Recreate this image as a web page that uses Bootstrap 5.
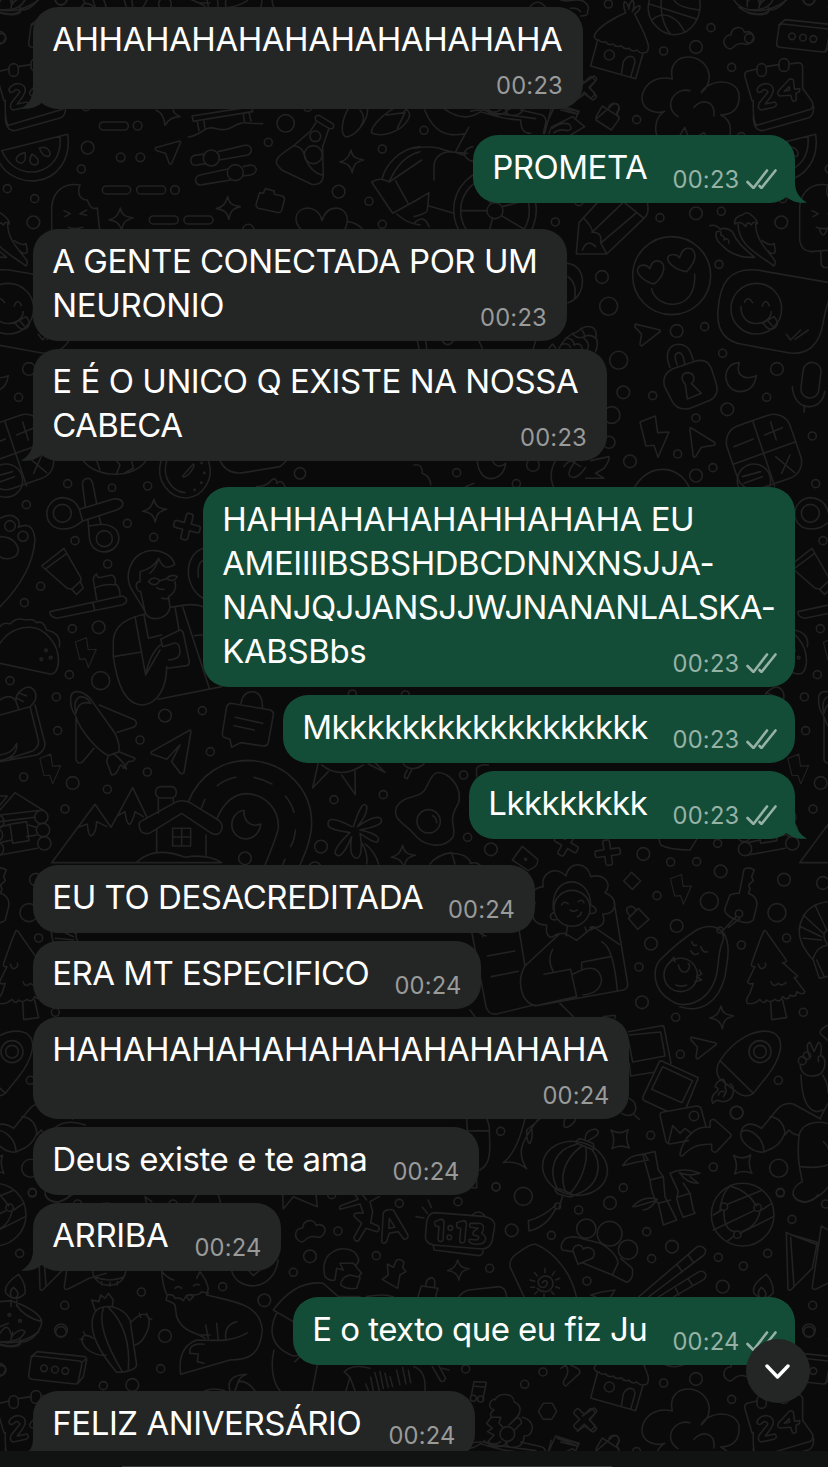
<!DOCTYPE html>
<html lang="pt-BR">
<head>
  <meta charset="UTF-8">
  <meta name="viewport" content="width=device-width, initial-scale=1">
  <title>Conversa</title>
  <link href="https://cdn.jsdelivr.net/npm/bootstrap@5.3.0/dist/css/bootstrap.min.css" rel="stylesheet">
  <style>
    body {
      background: #0a0a0a;
      font-family: Inter, "Liberation Sans", sans-serif;
    }
    .chat-screen {
      width: 828px;
      height: 1467px;
    }
    .wallpaper {
      z-index: 0;
      fill: none;
      stroke: #222;
      stroke-width: 4.8;
      stroke-linecap: round;
      stroke-linejoin: round;
    }
    .chat-log {
      z-index: 1;
      height: 1451px;
      padding: 7px 33px 0;
      gap: 8.5px;
    }
    .bubble {
      display: grid;
      padding: 9.75px 19.5px 11.75px 19.25px;
      border-radius: 25px;
      color: #fff;
      font-size: 33px;
      line-height: 44px;
    }
    .bubble-in { background: #242626; }
    .bubble-out { background: #144d37; }
    .last-in-group { margin-bottom: 18px; }
    .bubble-text,
    .bubble-meta { grid-area: 1 / 1; }
    .bubble-text { padding-bottom: 2px; }
    .bubble-text span { white-space: pre; }
    .meta-below .bubble-text { padding-bottom: 36px; }
    .bubble-meta {
      font-size: 23.7px;
      line-height: 30px;
      margin-bottom: -4px;
      color: #999a9a;
    }
    .bubble-out .bubble-meta {
      color: #96b2a6;
      margin-right: -1px;
    }
    .ticks {
      width: 31px;
      height: 20px;
      margin: -2px 0 0 6px;
    }
    .tail {
      bottom: 0;
      width: 30px;
      height: 26px;
    }
    .bubble-in .tail { left: -12px; fill: #242626; transform: scaleX(-1); }
    .bubble-out .tail { right: -12px; fill: #144d37; }
    .scroll-down {
      z-index: 2;
      right: 18px;
      bottom: 64px;
      width: 64px;
      height: 64px;
      background: #242626;
    }
    .input-bar {
      z-index: 1;
      height: 16px;
      background: #111313;
    }
    .input-edge {
      width: 490px;
      height: 1px;
      margin-left: 122px;
      background: #353636;
    }
  </style>
</head>
<body>

  <div class="chat-screen position-relative overflow-hidden d-flex flex-column">

    <svg class="wallpaper position-absolute top-0 start-0" width="828" height="1467" viewBox="0 0 828 1467" aria-hidden="true">
      <defs>
        <path id="spark" d="M-2-34C2-14 10-8 36-4C14 2 6 8 2 34C-4 12-12 6-36 2C-14-4-8-14-2-34Z"/>
        <path id="softstar" d="M-27-28Q0-12 24-29Q14 0 28 26Q0 14-24 28Q-12 0-27-28Z"/>
        <path id="bolt" d="M-44-44L2-62L9-12L43-14L10 62L-2 26L-26 28Z"/>
        <path id="plane" d="M-38-22L36-36Q42-34 36-26L6 30Q0 32-2 24L-9-2L-36-14Q-40-18-38-22Z"/>
        <path id="cross" d="M-10-32Q-10-38-4-38H4Q10-38 10-32V-10H32Q38-10 38-4V4Q38 10 32 10H10V32Q10 38 4 38H-4Q-10 38-10 32V10H-32Q-38 10-38 4V-4Q-38-10-32-10H-10Z"/>
        <path id="cloud" d="M-36 28C-50 14-42-8-22-8C-20-34 12-38 18-16C38-24 52-6 42 8C38 20 26 22 16 18C2 16-8 22-14 28C-22 36-30 34-36 28Z"/>
      </defs>
      <g id="tile">
        <g id="doodlesA" transform="scale(.3333)">
          <!-- watermelon, popsicle -->
          <path d="M5 452L203 403C214 480 170 535 110 542C55 548 12 515 0 490M5 452C30 505 65 520 110 515C155 505 185 470 180 410M75 458C45 465 40 485 64 490Q80 485 75 458ZM96 462C82 485 95 500 112 492Q122 478 96 462ZM118 445C140 435 155 455 148 468Q130 475 118 445Z"/>
          <path d="M155 700V620C160 570 195 548 240 555C230 580 240 600 262 600C270 625 280 628 292 624L300 700C304 740 290 745 270 748L190 755Q158 752 155 720ZM218 752L220 795Q232 812 246 795L245 750M192 632L211 641L195 650M260 630L240 641L260 646M205 682Q225 690 248 682M214 685Q225 725 238 685"/>
          <!-- coded dashes -->
          <rect x="298" y="366" width="87" height="24" rx="12"/><rect x="307" y="558" width="85" height="24" rx="12"/><rect x="410" y="558" width="87" height="24" rx="12"/><rect x="448" y="648" width="87" height="24" rx="12"/><rect x="552" y="648" width="87" height="24" rx="12"/>
          <!-- bench, sliders -->
          <path d="M468 330Q492 340 495 376Q510 350 540 350Q520 340 520 330M576 348L755 320L758 335L580 364ZM592 364L597 392M612 362L615 388M730 342L734 368M748 340L753 364M565 411C610 405 610 375 650 386C700 400 700 360 750 370L788 371"/>
          <path d="M610 462L580 467Q568 475 575 490Q580 498 592 495L616 491M655 455L735 436Q750 434 754 448Q755 462 740 466L657 480M683 507L600 525Q585 530 587 545Q592 558 607 554L692 540M730 500L750 495Q765 494 769 508Q768 522 752 525L728 528"/>
          <circle cx="634" cy="474" r="24"/><circle cx="706" cy="518" r="24"/>
          <!-- flask -->
          <path d="M958 346L1000 372Q1006 388 988 386L948 362Q940 346 958 346ZM948 368L930 395L880 438C840 465 825 475 830 492L845 510L935 553Q965 558 970 530L968 440L986 388M882 438C920 440 910 480 930 500Q945 520 968 525"/>
          <circle cx="946" cy="409" r="16"/><circle cx="940" cy="464" r="27"/>
          <!-- beans -->
          <path d="M1045 326C1025 360 1018 410 1042 411C1070 405 1105 360 1103 326M1080 330Q1100 350 1082 380M1180 326C1140 350 1105 390 1117 400C1150 412 1200 395 1220 365Q1240 340 1215 325M1160 345L1215 338L1192 385M1208 340L1222 325"/>
          <use href="#plane" transform="translate(506 462) rotate(-5)"/>
          <use href="#spark" x="1055" y="484"/><use href="#spark" x="685" y="624"/><use href="#spark" x="363" y="658"/>
          <path d="M779 578L790 580L796 566L823 573V583L847 588Q856 592 853 600L845 632Q840 640 830 637L775 625Q766 620 769 610Z"/>
          <path d="M910 695C870 660 890 620 930 625Q960 632 966 662Q980 620 1015 625C1055 635 1050 690 1005 720M1045 665Q1075 670 1090 690"/>
          <!-- wheel and bag -->
          <path d="M1260 440C1195 445 1155 500 1147 535M1168 545Q1200 470 1260 455M1115 546Q1140 530 1168 546L1265 480M1115 546L1178 640L1260 595M1187 543L1225 612M1190 642Q1220 670 1260 675"/>
        </g>

        <g id="doodlesB" transform="translate(414 0) scale(.3333)">
          <path d="M706 0C690 60 740 106 785 104C835 100 865 50 857 0M706 12L850 58M742 0C738 40 750 80 770 103M780 0Q790 22 857 30M716 58C750 30 790 50 812 96"/>
          <!-- hut -->
          <path d="M635 38C590 58 550 85 540 108Q545 122 555 120Q560 130 575 125Q582 138 598 132Q605 144 622 137Q630 150 645 145Q655 158 668 150Q680 162 690 158Q705 160 703 135C690 90 670 60 662 42M635 38Q625 15 632 5Q642 8 645 28Q645 8 656 0Q665 12 655 35Q668 15 678 18Q680 30 662 42M550 124L530 198L665 236L687 160M622 224L628 185Q640 165 655 170Q665 176 662 190L650 232"/>
          <circle cx="586" cy="165" r="15"/>
          <path d="M960 0C980 35 1050 50 1118 0M975 22L990 32Q1040 50 1060 35L1063 22M1000 0V20M1040 0L1035 24M440 0C470 10 490-10 510 5Q530 20 520 35Q525 48 500 48M470 25Q490 22 500 35M345 25Q370-10 395 22"/>
          <use href="#cloud" x="973" y="113"/>
          <!-- tree crown -->
          <path d="M775 237C755 150 880 150 886 230Q885 260 862 278M775 237C690 215 650 320 720 335Q740 340 752 334M862 278C880 240 960 230 975 280C980 330 950 345 920 345M752 334C725 350 720 385 730 410M920 345Q955 360 948 405M828 272C780 260 745 320 792 350M840 322C860 295 905 300 900 348M775 445L812 382L835 440M840 415L870 398L885 420"/>
          <!-- calendar -->
          <path d="M1029 207L1000 214Q990 218 993 230L1014 302M1056 200L1095 194M1127 192L1155 188Q1165 190 1166 200V265L1195 305Q1200 322 1190 328L1028 376Q1016 365 1018 302M1018 350Q1018 390 1045 392L1185 353Q1200 345 1199 320"/>
          <rect x="1029" y="191" width="28" height="38" rx="14"/><rect x="1095" y="176" width="30" height="38" rx="14"/>
          <path d="M1029 268C1040 243 1085 245 1077 277C1070 297 1058 303 1054 312L1083 306Q1093 315 1080 322L1042 330Q1028 325 1036 309L1062 276Q1053 262 1043 275Q1030 282 1029 268ZM1126 238Q1140 233 1139 248L1142 268L1157 266Q1160 276 1146 280L1147 300Q1136 310 1133 295L1130 286L1098 288Q1085 282 1096 270ZM1126 260L1111 274L1127 271Z"/>
          <!-- scattered tools under the first bubble -->
          <path d="M505 252L540 228Q550 232 547 240L527 264L548 288Q545 298 535 300L512 282L490 298M565 318L614 350Q616 358 612 362L592 390L546 360Q545 350 552 340ZM585 320Q592 306 608 311Q620 320 614 332L608 345M405 400L412 382L475 350L512 380L470 405M415 385Q440 365 465 372Q480 390 460 392Q435 385 420 398M412 325L392 400M320 330L385 345Q395 350 396 365L388 400M430 318L495 335L488 342L440 330M90 326Q150 370 200 335Q280 360 320 360Q320 400 350 400M210 326C240 355 270 345 285 326M32 330C60 400 100 410 150 402M164 382L125 455M0 445Q60 435 90 450Q120 455 148 465M60 540V500Q60 465 100 455L160 460M176 440Q155 445 150 460Q155 480 178 485M0 605L45 578L40 630M45 618L120 640M0 650Q40 640 40 630M0 670Q30 640 45 680"/>
          <circle cx="243" cy="630" r="124"/><circle cx="243" cy="632" r="103"/><circle cx="243" cy="632" r="24"/>
          <path d="M219 632H142M236 655L215 730M262 647L335 690M265 620L340 600M230 610L190 540"/>
          <!-- pencil -->
          <path d="M550 608L495 668L487 762H578L690 655Q708 640 700 608M510 655Q540 690 534 697Q565 695 560 728L578 762M534 697L630 605M562 728L665 640M505 750Q520 715 545 740M628 605L690 655"/>
        </g>

        <g id="doodlesC" transform="translate(414 210) scale(.3333)">
          <circle cx="773" cy="197" r="117"/>
          <path d="M713 236C725 300 850 310 842 192M720 222C690 215 655 185 677 168Q695 160 708 176Q715 145 740 155C760 170 745 205 720 222ZM818 185C780 180 750 150 765 137Q785 128 797 143Q808 105 835 118C855 140 832 170 818 185Z"/>
          <!-- peppers -->
          <path d="M887 47Q905 42 920 58Q935 50 955 65C970 100 990 115 1022 142Q960 145 925 107Q900 85 908 65Q925 60 920 75Q935 80 930 90Q945 80 945 100M962 42Q960 20 985 15Q1000 0 1015 18Q1030 30 1030 42Q1020 30 1012 45Q1000 30 995 50Q980 30 962 42M972 42C975 110 1030 130 1080 168Q1085 165 1083 152C1060 120 1025 90 1025 42M1045 92Q1070 110 1080 100Q1085 120 1083 128Q1070 135 1062 122"/>
          <path d="M460 160C520 165 520 260 462 278M462 200Q490 220 482 265"/>
          <!-- raspberry -->
          <path d="M405 415L416 402L425 415M435 415Q455 375 490 365Q520 340 540 355Q550 370 545 380Q555 400 545 425M440 405Q460 395 470 412M455 385Q480 385 480 405Q500 395 505 415M475 370Q490 390 510 380Q530 370 545 385M500 355Q515 370 510 385Q530 400 520 420"/>
          <!-- message card -->
          <path d="M1030 180L1270 222Q1238 270 1228 335C1218 405 1180 440 1115 427L985 403Q905 390 912 300C918 220 945 172 1030 180Z"/>
          <circle cx="1027" cy="296" r="76"/>
          <path d="M992 277Q1000 255 1016 278M1045 288Q1055 262 1066 287M981 290C980 360 1070 350 1072 305M1048 340Q1065 365 1080 355Q1100 340 1080 320L1045 340M1060 330L1075 348M1117 373L1130 390L1160 360M1143 388L1183 360"/>
          <use href="#plane" transform="translate(690 378) rotate(24)"/>
          <!-- padlock -->
          <path d="M768 472C750 430 765 403 795 403C825 405 830 425 838 450M790 465Q775 430 795 428Q808 430 812 460M775 477L845 453Q880 445 892 475L908 525Q915 555 890 570L825 596Q790 602 775 575L752 530Q742 495 775 477ZM814 523C797 505 805 488 822 488C842 490 845 512 832 520L862 550L820 567Z"/>
          <path d="M976 458C920 460 925 540 975 545Q1020 545 1027 497C985 515 965 490 976 458Z"/>
          <rect x="1164" y="457" width="54" height="107" rx="27" transform="rotate(7 1190 510)"/>
          <path d="M1135 530C1140 610 1225 605 1232 545M1172 586L1170 607"/>
          <use href="#bolt" x="722" y="680"/>
          <path d="M832 654Q828 650 828 660L838 740Q842 744 846 738L862 712L900 706Q908 702 900 696Z"/>
          <!-- calculator -->
          <rect x="950" y="626" width="200" height="200" rx="52" transform="rotate(-19 1050 726)"/>
          <path d="M1017 635L1082 828M958 763L1145 695M960 710L1018 687M1070 636L1087 690M1052 675L1105 653M1085 740L1142 788M1128 735L1103 790M985 800L1040 785M990 820L1045 800"/>
          <circle cx="1020" cy="812" r="50"/>
          <!-- thumb and watch arcs -->
          <path d="M425 750C405 790 410 810 420 835M450 770Q460 750 485 752L470 775Q460 795 470 800Q490 810 515 772M470 752L500 770M530 752L585 740Q588 750 570 775L545 790L570 805L515 805M660 835C700 760 790 760 825 830M190 752C195 830 270 815 275 760Q250 780 235 752M0 765Q25 760 25 790Q50 800 50 825M155 830L180 820"/>
          <path d="M10 393L15 415M35 393L38 415M195 393L205 415M365 393L358 415M85 393Q100 415 118 393"/>
        </g>

        <g id="doodlesD" transform="translate(0 440) scale(.3333)">
          <!-- earth, stopwatch -->
          <path d="M250 62C290 115 400 118 438 62M290 62L300 90M350 62L360 75L350 100M395 62L400 85L375 98M660 62Q680 105 730 98L840 80L860 62M770 140Q800 140 815 120Q830 110 830 130Q845 115 855 140"/>
          <path d="M483 62C465 125 510 175 560 174C610 170 645 115 625 62M500 62C485 110 515 155 555 158M548 108L580 72Q588 78 565 104Q550 115 548 108Z"/>
          <!-- scissors -->
          <circle cx="187" cy="220" r="27"/><circle cx="313" cy="296" r="24"/>
          <path d="M238 208L340 177Q365 175 369 190Q368 203 350 210L248 243C230 255 220 267 187 267C125 265 125 178 187 173Q225 175 238 208L248 243M256 200L247 130Q250 115 265 115Q275 118 278 130L290 190M264 240L268 290C270 350 350 350 357 296Q355 255 303 253L266 258M297 228L303 253"/>
          <use href="#spark" x="464" y="212"/><use href="#cross" transform="translate(561 260) rotate(14) scale(1.05)"/>
          <!-- toothpaste and brush -->
          <path d="M125 378L192 325L242 412L243 422L215 448L202 445ZM135 388L200 340M215 448L230 463L250 444L242 428M290 478L280 420Q280 408 290 402Q290 415 305 412L335 405Q350 412 345 430Q360 440 360 466M283 445Q310 430 350 435M150 515L365 468Q380 470 380 482Q378 492 365 495L170 535Q148 530 150 515ZM278 487L284 510"/>
          <!-- man with glasses -->
          <path d="M435 515C400 450 380 440 385 400C395 340 440 330 465 332C500 335 520 355 524 374C500 390 485 380 476 355Q460 385 420 395L420 425C400 425 410 455 422 455L435 515C440 545 505 545 510 500L505 470C525 460 530 440 525 425M476 355Q470 380 450 400M445 425Q460 405 480 422Q465 445 445 425ZM500 415Q515 400 532 410Q520 430 500 415ZM480 422L500 416M470 443Q480 450 492 448M485 475Q500 478 508 475M435 522C380 535 345 555 340 600V650C350 720 370 795 430 795C475 790 500 740 500 680M340 650L420 637M405 530L437 705L480 630M432 525L445 595L485 585M510 502L525 500L537 570M525 500Q580 488 610 500M548 500L628 745M583 587L608 585M482 598L540 570Q548 570 550 580L568 665Q568 675 560 677L503 685M482 598L488 620L515 612Q540 600 540 640Q535 660 505 660M437 705Q450 640 482 615M475 778L665 740M610 325C550 345 550 440 610 475M610 360Q590 370 595 412"/>
          <!-- paw shape, taco -->
          <path d="M0 235Q35 215 55 240Q60 250 55 262Q100 240 105 300C100 370 60 440 0 500M0 290C40 290 65 320 50 345C35 360 10 358 0 350"/>
          <circle cx="30" cy="258" r="16"/><circle cx="69" cy="289" r="15"/>
          <path d="M0 670L150 702Q170 705 175 670C180 610 130 562 90 562C50 562 20 580 0 610M0 560Q10 545 30 552Q50 530 75 540Q100 535 110 548Q130 540 140 570Q185 580 178 620"/>
          <circle cx="138" cy="631" r="4"/><circle cx="124" cy="658" r="4"/><circle cx="152" cy="653" r="4"/>
          <use href="#bolt" transform="translate(258 638) scale(.72)"/>
        </g>

        <g id="doodlesE" transform="translate(0 690) scale(.3333)">
          <path d="M0 75L90 50L115 150Q118 170 100 182L30 205M90 50Q115 30 105 5Q90-20 65 0Q45 15 48 35L55 55M105 45L135 160Q135 185 110 195L0 215M45 30Q30 10 0 30M0 195Q40 190 50 160Q55 200 0 212M55 8L80 18M52 25L70 35"/>
          <!-- plane -->
          <path d="M212 30C210 0 240-5 270 25L345 130Q360 160 357 185L325 197C290 180 240 120 228 80C215 60 212 50 212 30ZM228 70Q235 30 272 40Q262 20 240 20Q218 30 228 70M298 45L405 90Q415 105 400 112L352 127M228 80V210Q235 225 248 215L282 175M325 197L320 215L335 255Q350 255 358 230L362 225L380 237Q372 215 340 190M357 185L405 205Q405 215 385 215L370 235"/>
          <path d="M455 185L570 120Q574 122 572 130L552 248Q545 255 540 248L515 215L540 165L500 208L458 193Q450 190 455 185Z"/>
          <!-- chat note -->
          <path d="M692 40L812 60Q822 65 820 75L805 158Q800 170 790 168L722 158L695 172L690 148L672 142Q665 138 668 125L680 50Q685 40 692 40ZM723 40Q730 0 765 6Q790 15 787 55M706 82L788 100M702 107L763 120"/>
          <use href="#bolt" transform="translate(151 237) scale(.72)"/>
          <!-- cabin -->
          <path d="M0 360L45 308L128 360L0 375M0 318H22L0 345M105 382L0 395M108 412L85 405M110 435L80 440M112 475L0 495M0 410L30 404M0 458L35 450M30 403L80 395L87 452L38 460Z"/>
          <circle cx="124" cy="381" r="20"/><circle cx="129" cy="420" r="20"/><circle cx="133" cy="460" r="20"/><circle cx="-8" cy="395" r="20"/><circle cx="-12" cy="435" r="20"/><circle cx="-9" cy="477" r="20"/>
          <!-- mountains, house -->
          <path d="M155 518L285 343L333 412L398 293L440 380M155 518H665M235 412L262 402Q265 440 275 437Q288 430 290 395L320 410M352 378L375 365Q380 405 390 403Q400 390 405 365L430 380M475 370V325M520 335V325M470 420V488M618 435V495M410 516C450 480 500 480 555 502Q620 490 665 518M418 408Q415 395 430 390L530 335Q550 328 570 338L655 390Q670 400 665 420Q655 440 635 430L545 370L448 430Q420 435 418 408ZM518 415H572V468H518ZM545 415V468M518 441H572"/>
          <rect x="467" y="290" width="62" height="34" rx="15"/>
          <path d="M565 335C600 250 670 212 745 211C860 215 935 300 935 400Q935 450 900 525M650 388C670 340 700 312 740 311C800 315 838 360 835 415Q830 440 795 525M652 287Q675 268 708 262M762 262Q790 268 816 282M856 318Q875 340 882 367M886 420Q885 445 872 470M855 508L848 525M604 355L615 328"/>
          <path d="M732 361C685 368 680 440 735 447Q775 445 783 402C750 415 730 390 732 361Z"/>
          <!-- flower, egg -->
          <path d="M1060 410C1080 350 1090 335 1100 348Q1105 370 1072 410C1130 370 1150 380 1143 398Q1135 408 1080 420C1130 430 1145 445 1130 457Q1115 455 1080 430C1090 480 1080 505 1070 505Q1045 500 1055 440C1030 500 1015 505 1005 490Q1005 470 1050 428C1000 420 975 415 987 392Q1000 380 1055 410M1085 458Q1105 490 1100 522M1095 462Q1125 485 1136 522"/>
          <path d="M1280 290C1300 245 1310 240 1340 255C1370 275 1385 310 1375 340C1340 400 1370 400 1360 440C1330 480 1270 470 1240 430C1215 400 1175 390 1190 350C1215 310 1265 330 1280 290Z"/><circle cx="1286" cy="394" r="35"/>
          <path d="M1298 377Q1310 382 1310 398M955 218L938 294L985 245M965 225Q1020 270 1090 225M1025 255L1066 314L1065 242M1105 222L1155 247L1125 218M1210 222Q1235 250 1272 222M1222 240Q1205 265 1222 266L1235 240M1430 260V235Q1440 222 1465 225"/>
          <use href="#spark" x="1210" y="500"/>
          <path d="M1290 522Q1310 495 1355 488L1365 522M1355 490Q1400 490 1415 520"/>
        </g>

        <g id="doodlesF" transform="translate(470 830) scale(.3333)">
          <use href="#cross" transform="translate(289 42) rotate(30)"/><use href="#cross" transform="translate(413 68) rotate(-8)"/>
          <path d="M157 49L203 88Q205 100 195 110L175 122L127 90ZM461 153L485 127L512 153L487 178ZM475 265L505 235L537 268L503 298ZM478 255Q460 235 482 229Q495 230 498 243M567 28L572 45Q600 60 660 60L680 28M0 100Q20 95 30 105"/>
          <circle cx="167" cy="88" r="3"/>
          <!-- curly haired girl -->
          <circle cx="306" cy="235" r="54"/>
          <path d="M195 220Q175 175 220 170C210 130 255 105 288 138C295 95 350 90 362 140C400 130 430 160 405 188C445 200 445 255 398 252Q410 285 380 292L360 300M195 220C180 260 190 285 230 285Q225 320 245 322L262 312M250 240C240 130 360 130 362 225M250 248C235 255 240 275 262 268M362 225Q385 235 375 248Q368 252 360 250M275 225Q282 210 295 222M325 215Q335 205 342 218M300 240Q310 248 322 240M322 260Q330 260 334 247M292 290L288 318M262 312L285 310L320 331L370 290L360 292M345 292L350 305M270 310L165 408C140 450 150 520 200 527L320 500L302 418L222 433M370 290L448 343M432 215L473 460Q475 475 460 480L195 528M395 335Q430 350 442 480M248 358Q230 390 250 425M335 418V397L422 380M310 432Q385 390 395 450Q390 490 340 495M148 305L165 408M5 305L48 530Q55 555 80 552L190 525M52 378L134 363M64 440L145 424M270 520L310 560M0 540L15 560M400 560L435 556V565M30 310L48 318M40 305L38 320"/>
          <use href="#bolt" transform="translate(633 178) scale(.72)"/>
          <!-- key -->
          <path d="M808 190L822 118Q835 108 853 120L845 140L850 152L836 165L840 178L835 190Q865 200 860 230L850 270Q835 285 805 272Q760 255 765 235L780 195Q795 188 808 190ZM800 258L760 300M810 265L775 292"/><circle cx="807" cy="251" r="11"/><circle cx="750" cy="300" r="9"/>
          <!-- avocado -->
          <path d="M680 300C720 280 765 290 760 330C740 370 750 410 735 450C710 520 640 540 600 510C550 480 545 420 570 390C610 350 640 325 680 300ZM762 310C785 350 770 400 765 440C745 520 690 550 630 530M592 405L612 382L615 395M665 335Q670 350 680 345M692 350Q700 370 712 365M662 362Q672 380 685 370M688 420L695 432L680 440L695 450L675 455M625 405Q630 430 650 425Q665 410 655 400M618 465Q635 472 650 465"/><circle cx="632" cy="435" r="50"/>
          <!-- pine tree -->
          <path d="M882 302Q888 300 892 310L950 392Q945 400 938 398L983 438Q980 445 972 442L1005 485Q1000 498 980 485Q980 505 960 495Q955 515 938 500Q930 520 915 508Q900 520 890 510Q880 525 870 508Q850 525 832 520Q825 510 840 490L850 460Q835 465 833 455L855 410Q842 412 845 400L870 330ZM902 515L905 569L950 563L938 510M865 402Q870 420 880 415Q890 410 886 400M903 455Q910 475 925 460Q935 470 948 458"/>
          <!-- croissant -->
          <path d="M1080 215C1000 220 970 290 1000 350Q1015 375 1030 390L1048 445L1080 438M1040 390L1062 438M1000 255L1060 310M992 290L1055 320M1000 325L1055 330M1030 385Q1040 350 1074 345M1035 225L1070 300M1074 300Q1050 310 1074 345"/>
          <use href="#spark" x="755" y="562"/>
        </g>

        <g id="doodlesG" transform="translate(0 1180) scale(.3333)">
          <!-- lamp -->
          <path d="M55 283C30 300 10 320 18 340Q45 370 75 340Q78 310 55 283ZM40 322Q25 335 35 352Q50 360 54 342Q52 330 40 322ZM33 360V380M50 360V379M0 365L33 362C60 370 130 400 125 430C115 470 80 490 60 485C70 500 30 505 0 495M50 375Q70 410 125 425M0 460Q25 420 35 470Q60 440 75 455Q60 490 0 485M0 440L25 430"/>
          <circle cx="28" cy="405" r="4"/><circle cx="60" cy="423" r="4"/>
          <!-- cactus -->
          <path d="M290 390C320 370 370 380 390 420L410 555Q405 575 350 577C310 530 270 470 277 420Q280 400 290 390ZM310 385C290 440 340 530 365 572M325 382C375 430 390 500 385 568M285 390L275 360L297 365L302 345L315 355L325 340L340 360L337 378M395 425Q430 390 445 410C455 440 430 490 405 495M280 475Q250 455 245 480C250 510 290 530 318 525M418 400L422 412M440 400L442 410M445 415L455 418M250 455L255 465M240 478L250 478"/>
          <!-- fox -->
          <path d="M485 275Q490 330 502 345L498 360L520 370L525 375L530 410C550 460 590 455 615 475M485 275Q510 300 522 300M620 345L625 325Q620 300 600 275L590 295M502 345Q520 340 525 355Q540 350 550 362Q560 340 580 345Q600 345 605 335L625 340M558 348Q570 340 580 350L568 362ZM525 325Q535 315 545 325M580 318Q588 310 598 315M620 345C700 365 780 370 787 450C780 530 740 540 690 540L542 583C535 530 550 495 590 480C640 480 690 490 743 458M710 425Q670 435 678 480M650 430L655 480M617 435L625 475M597 465L630 465M570 520C565 495 590 490 612 493M570 520L595 522L592 545L612 550"/>
          <!-- box with three dots -->
          <path d="M105 528L240 543Q247 545 245 555L235 605Q232 613 225 612L95 598Q85 595 86 587L93 535Q97 527 105 528ZM93 530L112 515L255 530Q260 533 260 540L250 590L232 612M245 548L260 535"/>
          <circle cx="132" cy="565" r="10"/><circle cx="165" cy="569" r="10"/><circle cx="196" cy="573" r="10"/>
          <path d="M278 275C285 330 370 330 377 275M283 290Q330 310 373 290M305 305V315M330 307V318M352 305V315M695 272C710 335 820 340 835 240M745 270L760 287L778 272M848 44L850 87L880 50L952 80L948 44M440 70L435 50L455 65M575 70L590 44M655 44L662 70M135 44C150 75 195 70 210 44M310 70H330"/>
          <!-- translate sign, crouching person -->
          <path d="M1020 88Q1015 78 1028 75L1075 58L1065 44M1020 88L1080 72L1090 100Q1060 95 1062 108L1085 130L1062 172Q1062 185 1075 183L1098 145L1130 155Q1142 150 1135 138L1112 128L1118 95L1110 65L1138 50M1088 44L1100 60M1145 185L1150 98Q1160 85 1180 90L1224 165Q1225 178 1212 178L1195 155L1168 160L1160 185Q1150 195 1145 185ZM1168 115L1185 142L1167 145Z"/>
          <use href="#cloud" x="930" y="152"/>
          <path d="M975 290C965 250 980 225 1000 215C1020 200 1060 205 1070 225C1080 240 1075 250 1068 255M975 290Q990 305 1005 300L1010 265L1030 270L1020 250L1060 250L1085 280Q1075 285 1080 295L1070 325Q1040 330 1022 315Q1025 290 1050 285L1080 292M970 310L1015 350L1080 350M970 310C900 300 850 350 820 390L880 425M830 400C805 450 810 500 880 528L905 525L885 545M822 510C810 560 820 610 840 632M952 555L937 632M1100 350Q1150 340 1180 350"/>
          <path d="M1185 250L1190 240Q1205 235 1212 248L1208 262L1218 275L1200 285L1193 325L1147 298L1165 285L1162 252L1180 262Z"/>
          <path d="M1033 575Q1060 550 1110 565M1033 575L1050 592L1038 632M1050 592L1065 632M1097 612L1105 632M1112 592L1120 632M1125 578L1138 632M1140 575L1150 625M1155 580L1165 622M1170 590L1178 620M1190 570L1200 615M1208 562L1218 612M1225 570L1232 608M690 632C680 600 700 585 740 583Q720 590 715 605L705 632M715 605Q740 600 765 632M615 632Q640 622 675 632"/>
        </g>

        <g id="doodlesH" transform="translate(414 1180) scale(.3333)">
          <!-- alarm clock -->
          <path d="M65 98L215 110Q245 118 242 140L235 180Q230 205 205 207L60 195Q30 190 35 160L38 125Q42 98 65 98ZM58 198L60 210L195 227Q208 225 207 212M175 105Q195 85 215 110M6 110L30 114M25 82L40 100M42 60L52 82"/>
          <path d="M62 125L80 118Q90 118 90 128L87 180Q80 190 72 180L75 140L65 138Q60 132 62 125ZM128 128L148 122Q157 122 157 132L152 185Q145 193 137 185L140 145L130 143Q126 135 128 128ZM168 130L195 130Q212 132 208 150L203 160Q220 170 213 183Q205 195 180 192Q160 188 166 178L188 180Q200 172 190 168L178 165Q175 157 182 152L192 145L170 142Q164 136 168 130Z"/>
          <circle cx="109" cy="144" r="7"/><circle cx="106" cy="172" r="7"/>
          <use href="#spark" transform="translate(133 270) scale(.9)"/>
          <path d="M12 350L22 318L72 325L65 350M35 318Q35 295 55 293Q68 302 60 323M135 350Q145 335 165 330L255 320Q275 322 278 350"/>
          <!-- surfboard -->
          <path d="M330 350L288 260Q285 235 310 220Q350 190 365 193C430 220 475 290 487 350M385 308Q395 295 400 308Q398 325 382 322Q365 310 378 295Q395 280 412 295Q425 315 405 332Q385 340 370 325M393 265V278M422 275L415 285M437 295L425 300M437 325L425 320M420 343L412 335M390 350V342M362 342L370 335M350 322H362M348 300L362 304M362 278L370 288M530 345Q560 335 603 330Q595 345 590 350M530 345L545 350"/>
          <!-- people on a boat -->
          <circle cx="517" cy="146" r="29"/><circle cx="587" cy="161" r="37"/><circle cx="642" cy="209" r="29"/>
          <path d="M510 178Q480 165 455 175Q435 195 445 210L475 215M510 178L560 190Q610 220 612 250L595 285L505 248M620 235L655 265Q660 300 638 307L595 285M492 253L478 215Q475 200 492 195Q505 195 508 208Q520 195 538 210Q545 225 535 235Z"/>
          <path d="M343 122L345 153Q400 140 425 85M343 122Q390 110 425 75M435 85L445 50"/><circle cx="431" cy="78" r="9"/>
          <!-- chopsticks -->
          <path d="M675 350L850 200Q865 195 875 210Q875 220 870 225L705 350M735 350L855 275Q870 270 876 285Q875 295 870 298L780 350M790 255L805 275M823 225L838 247M785 325L795 345M823 297L835 315"/>
          <!-- open book -->
          <path d="M1117 158Q1115 155 1125 162L1210 187L1195 265L1130 330Q1122 333 1122 325ZM1130 172L1140 318M1125 162L1205 192M1222 138L1195 320Q1195 330 1205 328L1270 295L1320 280M1222 138L1260 160L1330 265"/>
          <!-- bandage, music note, flower bouquet -->
          <path d="M55 560L80 603Q90 608 95 595L75 558M85 565L105 570M440 565L455 555Q470 575 450 600Q445 615 455 618L497 580Q500 570 490 565L470 555M0 560C30 570 35 600 33 632M180 605L217 607L207 657M180 605L172 648M180 618L214 622"/>
          <circle cx="178" cy="655" r="9"/><circle cx="200" cy="657" r="9"/>
          <path d="M240 690C210 680 240 650 243 660C255 635 300 640 300 665C325 675 320 700 310 710L285 735M240 690Q225 700 232 712L260 712L255 730L265 740M232 712L218 730L235 745L220 755L240 765L222 785Q240 800 260 785M325 712Q355 720 355 745Q350 770 330 768Q330 800 300 802Q280 805 275 788M285 735L310 712Q325 720 322 730L302 750M373 694L388 670H415L428 694L413 718H388ZM405 812L425 768L495 790L485 812M430 775L490 798M170 790Q210 780 240 795L365 812M548 812L590 775Q595 765 610 768Q620 780 608 795L615 812"/>
          <circle cx="280" cy="762" r="22"/>
          <use href="#cross" transform="translate(511 718) rotate(45)"/>
        </g>

        <g id="doodlesI" transform="translate(600 1010) scale(.3333)">
          <!-- photos -->
          <path d="M85 65L185 47Q192 47 193 55L213 160M88 75L182 66L195 138L98 156L85 90M88 160L92 198L160 187M178 155Q183 150 190 155L295 203L260 290M178 155L128 262Q128 270 135 273L200 303M188 170L278 212L246 278L155 238ZM180 315Q180 308 190 306L290 288Q300 288 303 295L318 350M180 315L198 395Q203 403 210 402L265 392M205 400L218 347L240 370L255 355L275 370M88 265Q115 280 105 305Q90 325 65 310M100 312L118 328"/>
          <circle cx="282" cy="318" r="14"/>
          <path d="M240 432C250 380 290 345 330 352V335Q335 325 345 330L392 372Q395 378 390 382L350 425Q340 430 335 420V403C290 400 270 415 248 437Q240 440 240 432Z"/>
          <!-- rocket -->
          <path d="M360 152C400 90 470 50 520 68C560 90 540 150 500 200L460 250Q440 265 415 250L358 205Q342 180 360 152L460 250M370 208Q350 212 345 230Q360 235 350 245Q330 260 338 280Q350 265 365 275Q400 275 400 240Q400 225 390 222M370 208Q380 220 375 235Q385 240 370 260M355 255Q360 240 372 245"/>
          <circle cx="480" cy="125" r="33"/><circle cx="480" cy="125" r="19"/>
          <!-- hand, slippers -->
          <path d="M628 140Q615 100 630 97L642 125L655 97Q668 100 662 135M600 165Q605 200 640 198Q675 195 675 155Q670 130 655 140V155M603 195C605 260 620 300 650 305L670 300M668 195Q685 220 684 248M660 325L684 280M684 45Q655 60 662 72L684 92"/>
          <circle cx="607" cy="152" r="12"/><circle cx="621" cy="137" r="11"/>
          <path d="M485 355L530 300Q550 275 580 282L662 327M485 355C430 320 410 370 430 395C460 430 490 430 500 422Q540 410 555 370Q550 325 510 320M425 365C450 350 490 385 492 422M555 375L567 360Q580 375 597 375M700 345C640 325 600 345 597 380C590 440 600 480 607 515C560 540 580 580 620 576C660 560 690 540 720 470M603 470C640 475 700 475 720 430M670 395Q690 410 690 450"/>
          <!-- bamboo -->
          <path d="M115 435L165 425L175 480L190 500L195 560L215 600M130 440L150 510Q155 560 175 580L180 600M68 467Q90 430 135 435L145 450Q110 455 68 467ZM150 510L190 500M175 580L212 570M210 490L235 545L230 565L240 600M250 520L270 550L280 600M232 562L270 550M210 490Q250 470 300 490Q270 500 238 488M240 490Q260 520 295 520L270 500M98 590Q130 555 172 568Q150 600 130 600M105 590L165 572M180 600L190 645L230 630L215 600M240 600L250 622L285 610L280 600"/>
          <use href="#softstar" x="60" y="388"/><use href="#softstar" x="428" y="464"/>
          <use href="#plane" transform="translate(300 117) rotate(24)"/>
          <!-- globe -->
          <circle cx="428" cy="614" r="94"/>
          <path d="M360 600Q365 550 390 528M382 583L482 542M395 530Q440 540 470 588M485 600L515 580M462 602L340 660M372 602Q370 660 405 665M420 670L520 620M480 605Q470 650 425 665M365 600L340 615M400 680L380 695"/>
          <circle cx="372" cy="590" r="11"/><circle cx="473" cy="593" r="11"/><circle cx="412" cy="674" r="11"/>
        </g>

        <g id="doodlesJ" transform="translate(460 1100) scale(.3333)">
          <!-- lantern -->
          <ellipse cx="345" cy="205" rx="98" ry="80" transform="rotate(12 345 205)"/>
          <path d="M348 128Q352 115 365 117L398 130Q405 138 400 150ZM375 120Q375 90 405 87Q425 95 405 110L385 122M285 265Q290 260 340 285Q340 292 325 290L295 282Q285 275 285 265ZM350 133C280 150 265 210 290 262M365 138C310 180 300 230 315 270M378 145C385 190 360 250 330 280M395 148C430 190 420 260 345 285"/>
          <path d="M195 55C180 120 160 165 130 188Q165 180 200 206C170 160 180 130 235 57M240 57L200 90Q200 130 210 130Q220 110 215 85M315 55Q305 90 325 80Q345 70 347 55M20 57L22 90M80 55Q90 80 88 92L22 93M88 92C90 150 95 190 60 210M50 240V264L35 263"/>
        </g>
        <g id="dots"></g>
      </g>
      <!-- the pattern repeats every 748 x 1332 -->
      <use href="#tile" x="-748"/><use href="#tile" x="748"/>
      <use href="#tile" y="1332"/><use href="#tile" x="-748" y="1332"/>
      <use href="#tile" y="-1332"/><use href="#tile" x="-748" y="-1332"/><use href="#tile" x="748" y="-1332"/>
    </svg>

    <main id="chatLog" class="chat-log position-relative overflow-hidden d-flex flex-column flex-shrink-0"></main>

    <button type="button" class="scroll-down btn rounded-circle border-0 p-0 position-absolute d-flex align-items-center justify-content-center" aria-label="Ir para o fim">
      <svg width="26" height="16" viewBox="0 0 26 16" fill="none" stroke="#fff" stroke-width="3.4" stroke-linecap="round" stroke-linejoin="round">
        <path d="M2 3L12.500 14L23 3"/>
      </svg>
    </button>

    <footer class="input-bar position-relative d-flex align-items-end flex-shrink-0">
      <div class="input-edge"></div>
    </footer>
  </div>

  <script src="https://cdn.jsdelivr.net/npm/bootstrap@5.3.0/dist/js/bootstrap.bundle.min.js"></script>
  <script>
    // width: bubble width, lines: [text, line width]
    const messages = [
      { width: 549.5, time: "00:23", tail: true, below: true, lines: [["AHHAHAHAHAHAHAHAHAHAHA", 510]] },
      { out: true, width: 322, time: "00:23", tail: true, lines: [["PROMETA", 155]] },
      { width: 533.5, time: "00:23", lines: [["A GENTE CONECTADA POR UM", 485], ["NEURONIO", 172]] },
      { width: 573.5, time: "00:23", tail: true, lines: [["E É O UNICO Q EXISTE NA NOSSA", 526], ["CABECA", 130]] },
      { out: true, width: 592, time: "00:23", lines: [["HAHHAHAHAHAHHAHAHA EU", 472], ["AMEIIIIBSBSHDBCDNNXNSJJA-", 492], ["NANJQJJANSJJWJNANANLALSKA-", 553], ["KABSBbs", 144]] },
      { out: true, width: 512, time: "00:23", lines: [["Mkkkkkkkkkkkkkkkkkk", 345.5]] },
      { out: true, width: 326, time: "00:23", tail: true, lines: [["Lkkkkkkkk", 159]] },
      { width: 501.5, time: "00:24", lines: [["EU TO DESACREDITADA", 371]] },
      { width: 448, time: "00:24", lines: [["ERA MT ESPECIFICO", 317]] },
      { width: 596, time: "00:24", below: true, lines: [["HAHAHAHAHAHAHAHAHAHAHAHA", 556]] },
      { width: 446, time: "00:24", lines: [["Deus existe e te ama", 315]] },
      { width: 248, time: "00:24", tail: true, lines: [["ARRIBA", 116]] },
      { out: true, width: 502, time: "00:24", tail: true, lines: [["E o texto que eu fiz Ju", 335]] },
      { width: 442, time: "00:24", tail: true, lines: [["FELIZ ANIVERSÁRIO", 309]] }
    ];

    const tailSvg = '<svg class="tail position-absolute" viewBox="0 0 30 26"><path d="M0 0H18V7C18.500 15 23 22 30 25.500C23 26.500 15 25 9.500 20L0 22Z"/></svg>';
    const ticksSvg = '<svg class="ticks" viewBox="0 0 31 20" fill="none" stroke="currentColor" stroke-width="2.6" stroke-linecap="round" stroke-linejoin="round"><path d="M1.500 13L7.500 19L21 1.500M13.500 17L15.500 19L29.500 1.500"/></svg>';

    document.getElementById("chatLog").innerHTML = messages.map(m => {
      const side = m.out ? "bubble-out align-self-end" : "bubble-in align-self-start";
      const lines = m.lines.map(l => `<div><span data-width="${l[1]}">${l[0]}</span></div>`).join("");
      return `<div class="bubble position-relative flex-shrink-0 ${side} ${m.tail ? "last-in-group" : ""} ${m.below ? "meta-below" : ""}" style="width:${m.width}px">
        <div class="bubble-text">${lines}</div>
        <div class="bubble-meta d-flex align-items-center align-self-end ms-auto">
          <span data-width="67">${m.time}</span>${m.out ? ticksSvg : ""}
        </div>
        ${m.tail ? tailSvg : ""}
      </div>`;
    }).join("");

    // spread the letters of each line to its width
    document.querySelectorAll("[data-width]").forEach(span => {
      const count = span.textContent.length;
      const extra = Number(span.dataset.width) - span.getBoundingClientRect().width;
      span.style.letterSpacing = (extra / count).toFixed(3) + "px";
    });

    // small rings between the doodles: origin, then x, y, r in thirds of a pixel
    const rings = [
      [0, 0, "263,443,19 244,507,12 22,566,12 104,596,12 100,667,19 413,377,13 362,472,13 421,472,13 525,570,13 857,370,26 805,427,12 1147,447,12 1016,575,19 1107,604,12 1147,673,12 745,690,17 258,320,12 923,322,12 4,115,14"],
      [414, 0, "583,12,12 846,141,19 749,153,12 891,83,12 953,202,12 668,359,12 30,391,12 982,410,12 424,666,12 738,653,12 846,640,19 922,634,12 495,605,12 1185,0,16"],
      [414, 210, "564,201,19 584,289,27 915,163,12 788,363,19 872,350,12 614,451,27 628,547,19 716,557,12 593,615,25 585,697,18 926,430,12 1089,477,19 1058,562,12 940,598,19 846,624,12 791,732,12 648,754,19 897,773,12 846,797,19 1195,678,12 357,765,19 307,821,12 128,788,12"],
      [0, 440, "203,131,12 336,143,11 443,138,12 382,250,12 225,302,12 323,372,12 122,439,12 73,488,12 79,194,12 461,292,12 217,566,12 296,562,19 302,722,27 208,704,12 30,722,12 169,771,12 495,827,19 607,812,12 173,872,12 605,69,2 613,99,2 604,128,2 584,150,2 900,100,17"],
      [0, 690, "420,150,12 631,185,12 442,246,12 71,261,12 218,279,19 322,298,12 195,357,12 735,505,19 1002,329,12 1150,314,12 963,470,19 1391,255,12 1403,442,12 1473,478,19 1057,12,12 1216,15,12 945,535,19"],
      [470, 830, "520,72,19 743,40,12 602,96,12 680,95,12 752,124,19 942,149,19 1059,159,19 561,197,12 718,214,27 921,248,27 620,288,19 543,341,19 814,345,12 950,324,12 507,411,12 516,517,19 617,562,12 1000,547,12 631,673,12 925,751,12 800,848,19"],
      [0, 1180, "97,39,12 59,220,12 194,376,12 424,336,12 668,320,12 183,451,19 495,468,19 793,361,19 880,277,12 930,229,19 1014,153,12 1129,227,12 1198,70,12 482,566,12 310,617,12 397,615,19 233,72,12 519,72,12 995,44,12"],
      [414, 1180, "246,20,12 328,49,27 132,65,12 293,151,19 412,166,12 494,90,12 588,69,19 628,23,12 698,155,12 774,200,19 713,236,12 519,303,12 227,265,12 913,232,12 988,258,12 926,320,19 1134,118,12 155,567,12 387,576,12 332,613,12"],
      [600, 1010, "410,308,19 152,376,12 340,471,12 536,475,27 541,547,12"],
      [460, 1100, "122,94,12 108,261,12"]
    ];
    document.getElementById("dots").innerHTML = rings.map(([x0, y0, list]) =>
      `<g transform="translate(${x0} ${y0}) scale(.3333)">` + list.split(" ").map(d => {
        const [x, y, r] = d.split(",");
        return `<circle cx="${x}" cy="${y}" r="${r}"/>`;
      }).join("") + "</g>").join("");
  </script>

</body>
</html>
